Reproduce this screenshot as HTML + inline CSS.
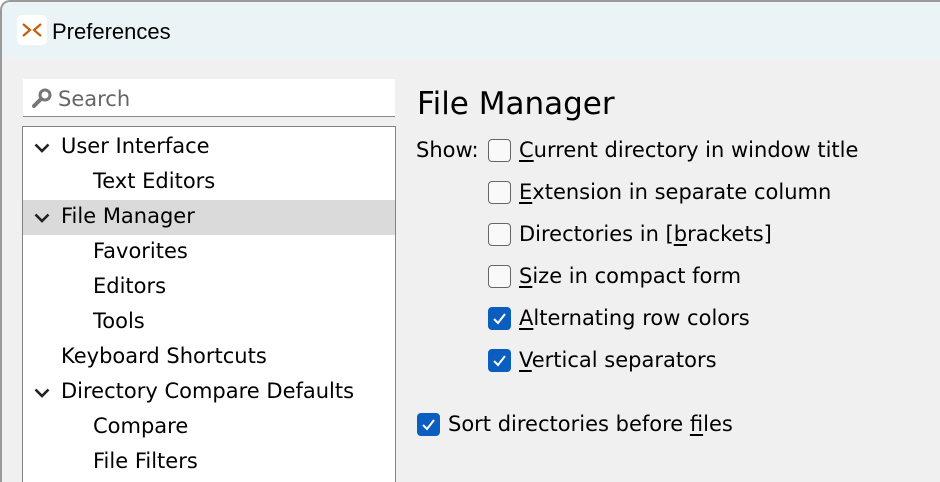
<!DOCTYPE html>
<html><head><style>
body{margin:0;width:940px;height:480px;overflow:hidden;background:#fff;font-family:"DejaVu Sans",sans-serif;color:#000}
.win{position:absolute;left:0;top:0;width:940px;height:482px;border-left:2px solid #9a9a9a;border-top:2px solid #9a9a9a;border-top-left-radius:10px;box-sizing:border-box;background:#f0f0f0;overflow:hidden}
.title{position:absolute;left:0;top:0;right:0;height:56px;background:#eaf4f6}
.icon{position:absolute;left:15px;top:13px;width:30px;height:30px;background:#fff;border-radius:5px}
.ttext{position:absolute;left:50px;top:17px;font-size:22px;font-family:"Liberation Sans",sans-serif}
.search{position:absolute;left:21px;top:77px;width:372px;height:37px;background:#fff;border-bottom:1px solid #888}
.search span{position:absolute;left:35px;top:8px;font-size:21px;color:#666}
.tree{position:absolute;left:20px;top:124px;width:372px;height:370px;background:#fff;border:1px solid #828282}
.row{position:absolute;left:0;width:372px;height:35px;font-size:21px;line-height:35px}
.sel{background:#dadada}
.chev{position:absolute;left:11px;top:13px}
.t{position:absolute;top:-1px}
.h1{position:absolute;left:415px;top:84px;font-size:31px}
.lbl{position:absolute;font-size:21px;margin-top:-1px}
.cb{position:absolute;left:486px;width:21px;height:21px;border:1.5px solid #666;border-radius:4px;background:#f9f9f9}
.cb.on{background:#0a5ec0;border-color:#0a5ec0}
u{text-decoration:underline;text-underline-offset:3px}
</style></head><body>
<div class="win">
<div class="title"><div class="icon"><svg width="30" height="30"><path d="M6 9 L13 15 L6 21 M24 9 L17 15 L24 21" stroke="#c0600a" stroke-width="2.2" fill="none"/></svg></div><div class="ttext">Preferences</div></div>
<div class="search"><svg style="position:absolute;left:8px;top:8px" width="22" height="22"><circle cx="14" cy="8" r="5" stroke="#777" stroke-width="3" fill="none"/><path d="M10 12 L3 19" stroke="#777" stroke-width="4" stroke-linecap="round"/></svg><span>Search</span></div>
<div class="tree">
<div class="row" style="top:3px"><svg class="chev" width="16" height="11"><path d="M1.5 1.5 L8 8 L14.5 1.5" stroke="#222" stroke-width="2.6" fill="none"/></svg><span class="t" style="left:38px">User Interface</span></div>
<div class="row" style="top:38px"><span class="t" style="left:70px">Text Editors</span></div>
<div class="row sel" style="top:73px"><svg class="chev" width="16" height="11"><path d="M1.5 1.5 L8 8 L14.5 1.5" stroke="#222" stroke-width="2.6" fill="none"/></svg><span class="t" style="left:38px">File Manager</span></div>
<div class="row" style="top:108px"><span class="t" style="left:70px">Favorites</span></div>
<div class="row" style="top:143px"><span class="t" style="left:70px">Editors</span></div>
<div class="row" style="top:178px"><span class="t" style="left:70px">Tools</span></div>
<div class="row" style="top:213px"><span class="t" style="left:38px">Keyboard Shortcuts</span></div>
<div class="row" style="top:248px"><svg class="chev" width="16" height="11"><path d="M1.5 1.5 L8 8 L14.5 1.5" stroke="#222" stroke-width="2.6" fill="none"/></svg><span class="t" style="left:38px">Directory Compare Defaults</span></div>
<div class="row" style="top:283px"><span class="t" style="left:70px">Compare</span></div>
<div class="row" style="top:318px"><span class="t" style="left:70px">File Filters</span></div>
</div>
<div class="h1">File Manager</div>
<div class="lbl" style="left:414px;top:137px">Show:</div>
<div class="cb" style="top:137px"></div><div class="lbl" style="left:517px;top:137px"><u>C</u>urrent directory in window title</div>
<div class="cb" style="top:179px"></div><div class="lbl" style="left:517px;top:179px"><u>E</u>xtension in separate column</div>
<div class="cb" style="top:221px"></div><div class="lbl" style="left:517px;top:221px">Directories in [<u>b</u>rackets]</div>
<div class="cb" style="top:263px"></div><div class="lbl" style="left:517px;top:263px"><u>S</u>ize in compact form</div>
<div class="cb on" style="top:305px"><svg width="21" height="21"><path d="M5 11 L9 15 L16 6" stroke="#fff" stroke-width="2" fill="none"/></svg></div><div class="lbl" style="left:517px;top:305px"><u>A</u>lternating row colors</div>
<div class="cb on" style="top:347px"><svg width="21" height="21"><path d="M5 11 L9 15 L16 6" stroke="#fff" stroke-width="2" fill="none"/></svg></div><div class="lbl" style="left:517px;top:347px"><u>V</u>ertical separators</div>
<div class="cb on" style="top:411px;left:415px"><svg width="21" height="21"><path d="M5 11 L9 15 L16 6" stroke="#fff" stroke-width="2" fill="none"/></svg></div><div class="lbl" style="left:446px;top:411px">Sort directories before <u>f</u>iles</div>
</div>
</body></html>
